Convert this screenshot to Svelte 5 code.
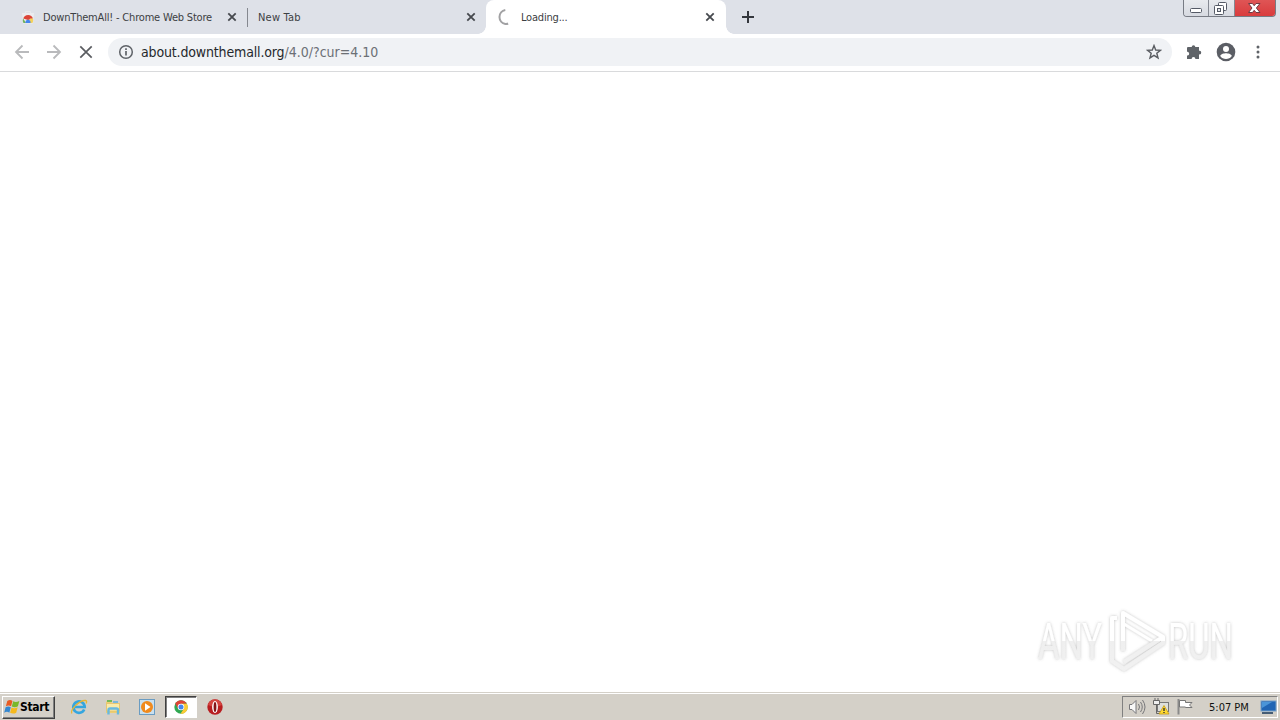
<script>
	const tabs = [
		{ title: 'DownThemAll! - Chrome Web Store', kind: 'store' },
		{ title: 'New Tab', kind: 'blank' },
		{ title: 'Loading...', kind: 'loading' }
	];
	const active = 2;
	const host = 'about.downthemall.org';
	const path = '/4.0/?cur=4.10';
	const time = '5:07 PM';
</script>

<div class="screen">
	<header class="tabstrip">
		{#each tabs as tab, i}
			<div class="tab {tab.kind}" class:active={i === active}>
				{#if tab.kind === 'store'}
					<svg class="favicon" width="16" height="16" viewBox="0 0 16 16">
						<path d="M2 4h12l-1 10.500H3z" fill="#ececef" />
						<path d="M5.500 4V2.500h5V4" fill="none" stroke="#e9eaed" />
						<path d="M3.300 9.500a5 5 0 0 1 9.600 0L8 11z" fill="#dc4437" />
						<path d="M3.200 9.500 6 14H3.500C2.700 12.500 2.500 11 3.200 9.500z" fill="#72b35a" />
						<path d="M10 9.500h3c.4 2 0 3.500-.7 4.500H8.500z" fill="#f4d25c" />
						<path d="M5.500 14a2.600 2.600 0 1 1 5 0z" fill="#4585ee" />
					</svg>
				{:else if tab.kind === 'loading'}
					<svg class="favicon" width="16" height="16" viewBox="0 0 16 16">
						<path d="M8.300 1.100A7 7 0 0 0 8.300 14.900q1.500.3 2.800-.4" fill="none" stroke="#a1a1a3" stroke-width="2" />
					</svg>
				{/if}
				<span class="title">{tab.title}</span>
				<svg class="close" width="10" height="10" viewBox="0 0 10 10">
					<path d="m1.300 1.300 7.400 7.400m0-7.400L1.300 8.700" stroke="#46494e" stroke-width="1.800" />
				</svg>
			</div>
		{/each}
		<svg class="plus" width="12" height="12" viewBox="0 0 12 12">
			<path d="M6 0v12M0 6h12" stroke="#34373d" stroke-width="2" />
		</svg>
		<div class="window-buttons">
			<div class="win">
				<svg width="24" height="16" viewBox="0 0 24 16">
					<rect x="6.500" y="8.500" width="11" height="4" rx="1" fill="#fff" stroke="#555a66" />
				</svg>
			</div>
			<div class="win">
				<svg width="25" height="16" viewBox="0 0 25 16">
					<rect x="9.500" y="2.500" width="8" height="8" rx="1" fill="#fff" stroke="#555a66" />
					<rect x="5.500" y="5.500" width="9" height="9" rx="1" fill="#fff" stroke="#555a66" />
					<rect x="8.500" y="8.500" width="3" height="3" fill="#e4e6ea" stroke="#555a66" />
				</svg>
			</div>
			<div class="win quit">
				<svg width="40" height="16" viewBox="0 0 40 16">
					<path d="M13.500 3.500h4l1.700 2.200 1.800-2.200h4l-3.600 4.500 3.600 4.500h-4l-1.800-2.200-1.700 2.200h-4L17 8z" fill="#fff" stroke="#713b43" />
				</svg>
			</div>
		</div>
	</header>

	<nav class="toolbar">
		<svg class="nav-icon" width="16" height="16" viewBox="0 0 16 16">
			<path d="M15 8H2m6.500-6.500L2 8l6.500 6.500" fill="none" stroke="#b9babc" stroke-width="1.800" />
		</svg>
		<svg class="nav-icon" width="16" height="16" viewBox="0 0 16 16">
			<path d="M1 8h13M7.500 1.500 14 8l-6.500 6.500" fill="none" stroke="#b9babc" stroke-width="1.800" />
		</svg>
		<svg class="nav-icon" width="16" height="16" viewBox="0 0 16 16">
			<path d="m2.300 2.300 11.400 11.400m0-11.400L2.300 13.700" stroke="#5a5c60" stroke-width="1.700" />
		</svg>
		<div class="omnibox">
			<svg width="16" height="16" viewBox="0 0 16 16">
				<circle cx="8" cy="8" r="6.300" fill="none" stroke="#5f6368" stroke-width="1.500" />
				<path d="M8 7v4.500M8 4.300V6" stroke="#5f6368" stroke-width="1.700" />
			</svg>
			<span class="url"><span class="host">{host}</span><span class="path">{path}</span></span>
			<svg class="star" width="16" height="16" viewBox="0 0 16 16">
				<path d="m8 1.600 1.700 4.400 4.700.3-3.600 3 1.200 4.600-4-2.600-4 2.600 1.200-4.600-3.600-3 4.700-.3z" fill="none" stroke="#5a5d62" stroke-width="1.400" />
			</svg>
		</div>
		<div class="actions">
			<svg width="16" height="16" viewBox="0 0 16 16">
				<path d="M2 3h3.700a1.800 1.800 0 1 1 3.600 0H13v3.800a1.800 1.800 0 1 1 0 3.500V15H9.400a1.900 1.900 0 0 0-3.800 0H1v-3.500h.7a1.900 1.900 0 0 0 0-3.700H1V4q0-1 1-1z" fill="#5f6368" />
			</svg>
			<svg width="20" height="20" viewBox="0 0 20 20">
				<circle cx="10" cy="10" r="9.300" fill="#5b5e65" />
				<circle cx="10" cy="7" r="3" fill="#fff" />
				<path d="M4.200 14c.5-2 4-2.700 5.800-2.700s5.300.7 5.800 2.700a7 7 0 0 1-11.600 0z" fill="#fff" />
			</svg>
			<svg class="dots" width="4" height="16" viewBox="0 0 4 16">
				<circle cx="2" cy="3" r="1.500" fill="#5f6368" />
				<circle cx="2" cy="8" r="1.500" fill="#5f6368" />
				<circle cx="2" cy="13" r="1.500" fill="#5f6368" />
			</svg>
		</div>
	</nav>

	<main class="page"></main>

	<svg class="watermark" width="240" height="80" viewBox="0 0 240 80">
		<defs>
			<linearGradient id="fade" x1="0" y1="0" x2="0" y2="76" gradientUnits="userSpaceOnUse">
				<stop offset=".51" stop-color="#fff" />
				<stop offset=".51" stop-color="#efefef" />
				<stop offset="1" stop-color="#f2f2f2" />
			</linearGradient>
			<filter id="glow" x="-10%" y="-10%" width="120%" height="120%">
				<feDropShadow dx="0" dy="0" stdDeviation="1.700" flood-color="#777" flood-opacity=".45" />
			</filter>
		</defs>
		<g filter="url(#glow)" fill="url(#fade)">
			<text x="8" y="57" textLength="64" lengthAdjust="spacingAndGlyphs">ANY</text>
			<text x="138" y="57" textLength="65" lengthAdjust="spacingAndGlyphs">RUN</text>
			<g fill="none" stroke="url(#fade)" stroke-width="4" stroke-linejoin="round">
				<path d="M93 49V11l40 24-39 25" />
				<path d="M87 16h-5v43l12 8 39-26v-6" />
				<path d="M94 22l28 17" stroke-width="3" />
			</g>
		</g>
	</svg>

	<footer class="taskbar">
		<div class="start">
			<svg width="16" height="16" viewBox="0 0 17 16">
				<path d="M3.500 1.500q3-1.800 5.500 0L7.500 7.300q-2.500-1.700-5.500 0z" fill="#e85b22" />
				<path d="M9.800 2q3 1.500 6.500-.5l-1.500 5.800q-3 1.800-6.500.3z" fill="#79b82c" />
				<path d="M1.700 8.200q3-1.700 5.500 0L5.700 14q-2.500-1.700-5.500 0z" fill="#3487d0" />
				<path d="M8 8.500q3 1.700 6.500-.2L13 14q-3 1.700-6.500.2z" fill="#f6b91d" />
			</svg>
			<span>Start</span>
		</div>
		<div class="launchers">
			<div class="app">
				<svg width="18" height="18" viewBox="0 0 18 18">
					<path d="M14.200 11.500A5.700 5.700 0 1 1 14.700 9H5" fill="none" stroke="#35a6df" stroke-width="2.700" />
					<path d="M2 15.500C-1 13 9 2 15.500 2.500q2 .5.500 3" fill="none" stroke="#e8b632" stroke-width="1.300" />
				</svg>
			</div>
			<div class="app">
				<svg width="18" height="18" viewBox="0 0 18 18">
					<path d="M2 3.500h5l1 1.500h8v10H2z" fill="#edce72" />
					<path d="M3 2h5v2H3z" fill="#74b958" />
					<path d="M9 3h5v2H9z" fill="#7bb8dc" />
					<path d="M2.500 5.500h13V13h-13z" fill="#faeba9" stroke="#dfbd66" stroke-width=".7" />
					<path d="M4.500 16.500V12q0-1.500 1.500-1.500h6.500q1.500 0 1.500 1.500v4.500" fill="none" stroke="#68b9de" stroke-width="2.400" />
				</svg>
			</div>
			<div class="app">
				<svg width="18" height="18" viewBox="0 0 18 18">
					<rect x="1.500" y="1.500" width="15" height="15" fill="#c9e0ef" stroke="#6a9cc2" />
					<circle cx="9" cy="9" r="6" fill="#f08a1d" />
					<path d="m7 5.300 5.500 3.700L7 12.700z" fill="#fff" />
				</svg>
			</div>
			<div class="app pressed">
				<svg width="14" height="14" viewBox="0 0 14 14">
					<circle cx="7" cy="7" r="6.700" fill="#30a852" />
					<path d="M1.200 3.600A6.700 6.700 0 0 1 12.800 3.600L7 4 4 8.600z" fill="#df4336" />
					<path d="M7 3.700h5.900A6.700 6.700 0 0 1 6.500 13.700L9.800 8.700z" fill="#fccb35" />
					<circle cx="7" cy="7" r="3.300" fill="#fff" />
					<circle cx="7" cy="7" r="2.500" fill="#4386ee" />
				</svg>
			</div>
			<div class="app">
				<svg width="18" height="18" viewBox="0 0 18 18">
					<circle cx="9" cy="9" r="7.700" fill="#b81d20" />
					<path d="M2 7a7.200 7.200 0 0 1 14 0q-7 3-14 0" fill="#d5443f" />
					<ellipse cx="9" cy="9" rx="2.900" ry="6" fill="#fff" />
					<ellipse cx="9" cy="9" rx="1.400" ry="5" fill="#851417" />
				</svg>
			</div>
		</div>
		<div class="tray">
			<svg width="18" height="18" viewBox="0 0 18 18">
				<path d="M1.500 6.500H4l4-4v13l-4-4H1.500z" fill="#f8f8f8" stroke="#77777a" />
				<path d="M10.500 6q2 3 0 6m2-8q3.500 5 0 10m2-12q5 7 0 14" fill="none" stroke="#77777a" />
			</svg>
			<svg class="network" width="18" height="18" viewBox="0 0 18 18">
				<rect x="5.500" y="4.500" width="11" height="9" fill="#dedfdc" stroke="#777" />
				<path d="M1.500 2.500h6v4h-6z" fill="#eee" stroke="#666" />
				<path d="M4.500 6.500v9h3" fill="none" stroke="#666" />
				<path d="M3 0v3m3-3v3" stroke="#666" />
				<path d="M12 7.500 17 16H7z" fill="#ffda31" stroke="#c79b10" stroke-width=".8" />
				<path d="M12 10v3m0 1v1" stroke="#333" stroke-width="1.400" />
			</svg>
			<svg class="flag" width="18" height="18" viewBox="0 0 18 18">
				<path d="M2.500 1v15.500" stroke="#8a8a8a" stroke-width="2" />
				<path d="M3.500 2.500h6v2h6.500l-2.500 2.500 2.500 2.500H9.500V9h-6z" fill="#fff" stroke="#777" />
			</svg>
			<span class="clock">{time}</span>
			<svg class="desktop" width="17" height="16" viewBox="0 0 17 16">
				<rect x="1" y="2" width="15" height="10" fill="#2165b4" stroke="#77a0c7" />
				<path d="M2 3h10L2 9z" fill="#4b95d8" />
				<path d="M2 14h11" stroke="#465d75" stroke-width="2" />
			</svg>
		</div>
	</footer>
</div>

<style>
	:global(body) {
		margin: 0;
		overflow: hidden;
	}

	.screen {
		width: 1280px;
		height: 720px;
		display: flex;
		flex-direction: column;
		position: relative;
		background: #fff;
		font-family: 'DejaVu Sans Condensed', 'DejaVu Sans', sans-serif;
		font-stretch: condensed;
	}

	svg {
		display: block;
		flex: none;
	}

	.tabstrip {
		height: 34px;
		flex: none;
		display: flex;
		align-items: flex-start;
		background: #dee1e8;
	}

	.tab {
		box-sizing: border-box;
		height: 34px;
		display: flex;
		align-items: center;
		color: #3c4043;
		font-size: 11px;
	}

	.tab.store {
		width: 248px;
		padding: 0 11px 0 20px;
		letter-spacing: -0.19px;
		background: linear-gradient(#85888f, #85888f) right 8px / 1px 19px no-repeat;
	}

	.tab.blank {
		width: 238px;
		padding: 0 10px;
		letter-spacing: 0.2px;
	}

	.tab.active {
		width: 240px;
		padding: 0 11px;
		position: relative;
		letter-spacing: -0.2px;
		background: #fff;
		border-radius: 8px 8px 0 0;
	}

	.tab.active::before,
	.tab.active::after {
		content: '';
		position: absolute;
		bottom: 0;
		width: 8px;
		height: 8px;
	}

	.tab.active::before {
		left: -8px;
		background: radial-gradient(circle at 0 0, transparent 7.5px, #fff 8px);
	}

	.tab.active::after {
		right: -8px;
		background: radial-gradient(circle at 100% 0, transparent 7.5px, #fff 8px);
	}

	.favicon {
		margin-right: 7px;
	}

	.loading .favicon {
		margin-right: 8px;
	}

	.title {
		flex: 1;
		white-space: nowrap;
	}

	.plus {
		margin: 11px 0 0 16px;
	}

	.window-buttons {
		box-sizing: border-box;
		display: flex;
		height: 17px;
		margin: 0 4px 0 auto;
		border: 1px solid #777b84;
		border-top: 0;
		border-radius: 0 0 4px 4px;
		overflow: hidden;
	}

	.win {
		border-right: 1px solid #858992;
		background: linear-gradient(#e8eaee, #d7dae1);
	}

	.quit {
		border: 0;
		background: linear-gradient(#df5555, #d93c3d);
	}

	.toolbar {
		box-sizing: border-box;
		height: 38px;
		flex: none;
		display: flex;
		align-items: center;
		padding: 0 20px 1px 14px;
		border-bottom: 1px solid #d9dadc;
	}

	.nav-icon {
		margin-right: 16px;
	}

	.omnibox {
		box-sizing: border-box;
		width: 1064px;
		height: 28px;
		margin-left: -2px;
		padding: 0 10px;
		display: flex;
		align-items: center;
		border-radius: 14px;
		background: #f0f2f5;
	}

	.url {
		margin-left: 7px;
		font-size: 14px;
		color: #25282c;
		white-space: nowrap;
	}

	.host {
		letter-spacing: -0.15px;
	}

	.path {
		color: #6c7075;
	}

	.star {
		margin-left: auto;
	}

	.actions {
		display: flex;
		align-items: center;
		flex: 1;
		gap: 14px;
		margin-left: 14px;
	}

	.dots {
		margin-left: auto;
	}

	.page {
		flex: 1;
	}

	.watermark {
		position: absolute;
		left: 1030px;
		top: 602px;
		font-family: Roboto, sans-serif;
		font-size: 50px;
		font-stretch: normal;
	}

	.taskbar {
		box-sizing: border-box;
		height: 28px;
		flex: none;
		display: flex;
		align-items: center;
		padding: 1px 2px 0 1px;
		border-top: 1px solid #d4d0c8;
		background: linear-gradient(#fff 1px, #d4d0c8 1px);
	}

	.start {
		box-sizing: border-box;
		width: 53px;
		height: 23px;
		display: flex;
		align-items: center;
		padding-left: 1px;
		border: 1px solid;
		border-color: #fff #404040 #404040 #fff;
		box-shadow: inset -1px -1px #808080;
		margin-left: 1px;
		color: #000;
		font-size: 12px;
		letter-spacing: -0.35px;
		font-weight: bold;
	}

	.launchers {
		display: flex;
		align-items: center;
		margin-left: 7px;
	}

	.app {
		width: 34px;
		height: 22px;
		display: flex;
		align-items: center;
		justify-content: center;
	}

	.pressed {
		box-sizing: border-box;
		width: 32px;
		margin: 0 1px;
		background: #fff;
		border: 1px solid;
		border-color: #404040 #fff #fff #404040;
		box-shadow: inset 1px 1px #808080;
	}

	.tray {
		box-sizing: border-box;
		width: 156px;
		height: 22px;
		margin-left: auto;
		display: flex;
		align-items: center;
		padding-left: 5px;
		border: 1px solid;
		border-color: #808080 #fff #fff #808080;
	}

	.network {
		margin-left: 6px;
	}

	.flag {
		margin-left: 6px;
	}

	.clock {
		width: 40px;
		margin-left: 15px;
		font-size: 11px;
		color: #111;
		white-space: nowrap;
	}

	.desktop {
		margin-left: 11px;
	}
</style>
